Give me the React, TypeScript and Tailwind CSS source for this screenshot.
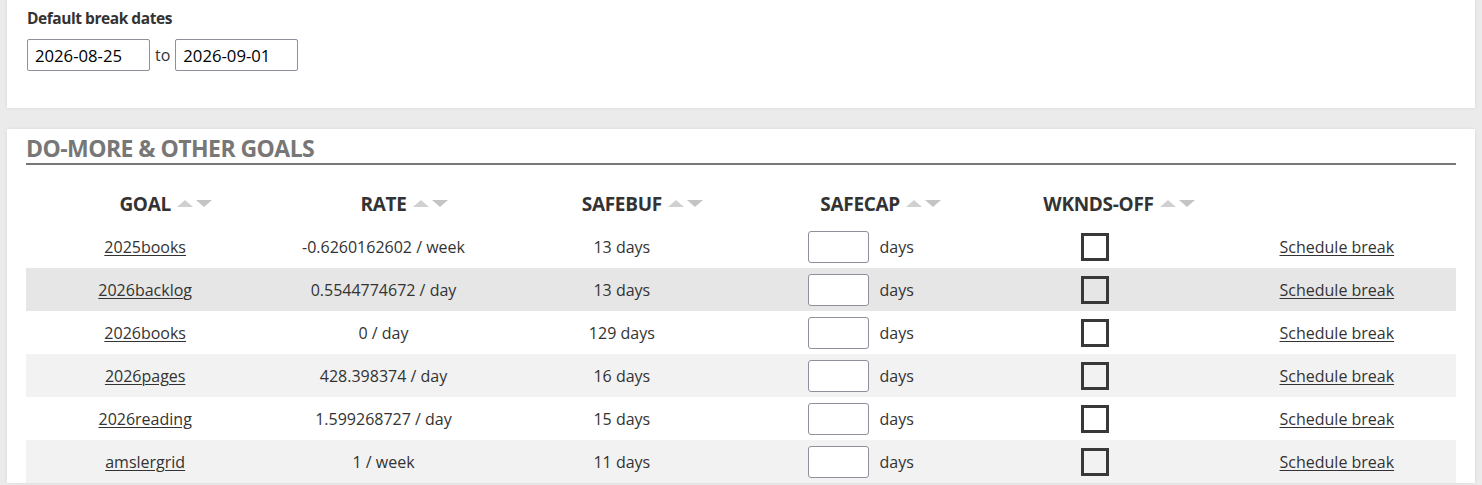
import React from "react";

const rows = [
  { goal: "2025books", rate: "-0.6260162602 / week", buf: "13 days", bg: "bg-white" },
  { goal: "2026backlog", rate: "0.5544774672 / day", buf: "13 days", bg: "bg-[#e6e6e6]" },
  { goal: "2026books", rate: "0 / day", buf: "129 days", bg: "bg-white" },
  { goal: "2026pages", rate: "428.398374 / day", buf: "16 days", bg: "bg-[#f2f2f2]" },
  { goal: "2026reading", rate: "1.599268727 / day", buf: "15 days", bg: "bg-white" },
  { goal: "amslergrid", rate: "1 / week", buf: "11 days", bg: "bg-[#f2f2f2]" },
];

function SortArrows() {
  return (
    <span className="absolute left-full top-[10px] ml-[6px] flex gap-[3px]">
      <svg width="16" height="7" viewBox="0 0 16 7">
        <polygon points="0,7 8,0 16,7" fill="#d0d0d0" />
      </svg>
      <svg width="16" height="7" viewBox="0 0 16 7">
        <polygon points="0,0 16,0 8,7" fill="#c4c4c4" />
      </svg>
    </span>
  );
}

function Header({ label, sortable = true }: { label: string; sortable?: boolean }) {
  return (
    <div className="flex justify-center">
      {label && (
        <span className="relative inline-block">
          {label}
          {sortable && <SortArrows />}
        </span>
      )}
    </div>
  );
}

export default function App() {
  return (
    <div
      className="min-h-screen bg-[#ebebeb] px-[7px] text-[#333]"
      style={{ fontFamily: '"Open Sans", "Noto Sans", sans-serif' }}
    >
      <div className="bg-white pl-[20px] pt-[7px] pb-[37px] shadow-[0_0_4px_rgba(0,0,0,0.08)]">
        <div className="text-[15.5px] font-bold leading-[22px] tracking-[-0.45px] text-[#333]">
          Default break dates
        </div>
        <div className="mt-[10px] flex items-center gap-[5px] text-[16px]">
          <input
            type="text"
            defaultValue="2026-08-25"
            className="h-[32px] w-[123px] rounded-[2px] border border-[#8f8f9d] bg-white pl-[7px] text-[16.7px] text-black outline-none"
          />
          <span className="text-[16px] text-[#333]">to</span>
          <input
            type="text"
            defaultValue="2026-09-01"
            className="h-[32px] w-[123px] rounded-[2px] border border-[#8f8f9d] bg-white pl-[7px] text-[16.7px] text-black outline-none"
          />
        </div>
      </div>

      <div className="mt-[21px] bg-white px-[19px] pt-[5px] shadow-[0_0_4px_rgba(0,0,0,0.08)]">
        <h2 className="h-[31px] border-b-2 border-[#777] text-[23px] font-bold leading-[29px] tracking-[-0.55px] text-[#777]">
          DO-MORE &amp; OTHER GOALS
        </h2>

        <div className="grid h-[60px] grid-cols-6 items-end pb-[7px] text-[19px] font-bold tracking-[-0.3px] text-[#333]">
          <Header label="GOAL" />
          <Header label="RATE" />
          <Header label="SAFEBUF" />
          <Header label="SAFECAP" />
          <Header label="WKNDS-OFF" />
          <Header label="" sortable={false} />
        </div>

        {rows.map((r) => (
          <div
            key={r.goal}
            className={`grid h-[43px] grid-cols-6 items-center text-center text-[16px] text-[#333] ${r.bg}`}
          >
            <div>
              <a href="#" className="text-[#333] underline decoration-1 underline-offset-2">
                {r.goal}
              </a>
            </div>
            <div>{r.rate}</div>
            <div>{r.buf}</div>
            <div className="flex items-center justify-center gap-[10px] pl-[2px]">
              <input
                type="text"
                className="h-[32px] w-[61px] rounded-[3px] border border-[#8f8f9d] bg-white outline-none"
              />
              <span>days</span>
            </div>
            <div className="flex justify-center pr-[6px]">
              <span className="block h-[28px] w-[28px] border-[3px] border-[#383838]" />
            </div>
            <div>
              <a href="#" className="text-[#333] underline decoration-1 underline-offset-2">
                Schedule break
              </a>
            </div>
          </div>
        ))}
      </div>
    </div>
  );
}
